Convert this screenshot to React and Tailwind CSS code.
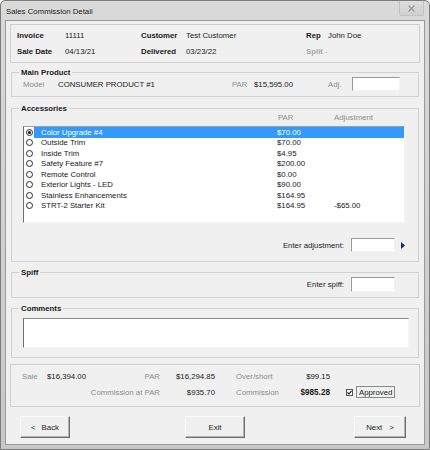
import React from 'react'

const accessories = [
  { name: 'Color Upgrade #4', par: '$70.00', adj: '' },
  { name: 'Outside Trim', par: '$70.00', adj: '' },
  { name: 'Inside Trim', par: '$4.95', adj: '' },
  { name: 'Safety Feature #7', par: '$200.00', adj: '' },
  { name: 'Remote Control', par: '$0.00', adj: '' },
  { name: 'Exterior Lights - LED', par: '$90.00', adj: '' },
  { name: 'Stainless Enhancements', par: '$164.95', adj: '' },
  { name: 'STRT-2 Starter Kit', par: '$164.95', adj: '-$65.00' },
]

function Input({ className = '' }) {
  return (
    <div className={"h-[14px] bg-white border border-t-[#9a9a9a] border-l-[#9a9a9a] border-r-[#f2f2f2] border-b-[#f2f2f2] " + className} />
  )
}

function Group({ title, className = '', children }) {
  return (
    <fieldset className={"mx-[5px] border border-[#d2d2d2] " + className}>
      <legend className="ml-[7px] px-[2px] font-bold leading-[9px]">{title}</legend>
      {children}
    </fieldset>
  )
}

function Button({ children, className = '' }) {
  return (
    <button className={"h-[22px] bg-[#f0f0f0] border border-t-[#fbfbfb] border-l-[#fbfbfb] border-r-[#6e6e6e] border-b-[#6e6e6e] shadow-[inset_-1px_-1px_0_#b4b4b4] flex items-center justify-center " + className}>
      {children}
    </button>
  )
}

function Radio({ checked }) {
  return (
    <div className="w-[7px] h-[7px] rounded-full border border-[#2a2a2a] bg-white flex items-center justify-center shrink-0">
      {checked && <div className="w-[3px] h-[3px] rounded-full bg-[#111]" />}
    </div>
  )
}

export default function App() {
  return (
    <div className="w-[430px] h-[450px] bg-gradient-to-b from-[#dadada] to-[#c8c8c8] border border-[#7c7c7c] rounded-t-[5px] font-['Liberation_Sans',Arial,sans-serif] text-[7.8px] leading-[9px] text-[#1a1a1a] flex flex-col">
      <div className="h-[19px] flex justify-between">
        <div className="pl-[5px] pt-[6px]">Sales Commission Detail</div>
        <div className="w-[25px] h-[15px] mr-[5px] border border-t-0 border-[#c2c2c2] rounded-b-[2px] bg-gradient-to-b from-[#dedede] to-[#d0d0d0] flex items-center justify-center">
          <svg width="7" height="7" viewBox="0 0 7 7">
            <path d="M1 1 L6 6 M6 1 L1 6" stroke="#9a9a9a" strokeWidth="1.3" strokeLinecap="square" />
          </svg>
        </div>
      </div>

      <div className="h-[425px] mx-[4px] bg-[#f0f0f0] border border-[#9a9a9a] flex flex-col">
        {/* header */}
        <div className="mt-[3px] mx-[4px] h-[39px] border border-[#cfcfcf] pl-[6px] pt-[6px]">
          <div className="grid grid-cols-[48px_76px_45px_120px_22px_auto] gap-y-[7px]">
            <div className="font-bold">Invoice</div>
            <div>11111</div>
            <div className="font-bold">Customer</div>
            <div>Test Customer</div>
            <div className="font-bold">Rep</div>
            <div>John Doe</div>
            <div className="font-bold">Sale Date</div>
            <div>04/13/21</div>
            <div className="font-bold">Delivered</div>
            <div>03/23/22</div>
            <div className="font-bold text-[#a8a8a8]">Split</div>
            <div className="text-[#a8a8a8] -ml-[3px]">-</div>
          </div>
        </div>

        {/* main product */}
        <Group title="Main Product" className="mt-[5px] pb-[5px] mx-[4px]">
          <div className="flex items-center pl-[11px]">
            <div className="w-[35px] text-[#8c8c8c]">Model</div>
            <div className="w-[174px]">CONSUMER PRODUCT #1</div>
            <div className="w-[22px] text-[#8c8c8c]">PAR</div>
            <div className="w-[74px]">$15,595.00</div>
            <div className="w-[24px] text-[#8c8c8c]">Adj.</div>
            <Input className="w-[48px]" />
          </div>
        </Group>

        {/* accessories */}
        <Group title="Accessories" className="mt-[7px] pb-[9px] mx-[4px]">
          <div className="flex pl-[266px] text-[#8c8c8c]">
            <div className="w-[56px]">PAR</div>
            <div>Adjustment</div>
          </div>
          <div className="ml-[11px] mt-[4px] w-[382px] h-[97px] bg-white border border-t-[#a0a0a0] border-l-[#6e6e6e] border-r-[#f4f4f4] border-b-[#f4f4f4]">
            {accessories.map((a, i) => (
              <div key={a.name} className="flex items-center h-[10.5px]">
                <div className="w-[10px] pl-[2px] flex items-center">
                  <Radio checked={i === 0} />
                </div>
                <div className={"flex-1 h-full flex items-center " + (i === 0 ? 'bg-[#3399ff] text-white' : '')}>
                  <div className="w-[243px] pl-[7px]">{a.name}</div>
                  <div className="w-[57px]">{a.par}</div>
                  <div>{a.adj}</div>
                </div>
              </div>
            ))}
          </div>
          <div className="flex items-center mt-[15px]">
            <div className="w-[339px] pr-[7px] text-right">Enter adjustment:</div>
            <Input className="w-[44px]" />
            <svg className="ml-[6px]" width="4" height="7" viewBox="0 0 4 7">
              <path d="M0 0 L4 3.5 L0 7 Z" fill="#1a237e" />
            </svg>
          </div>
        </Group>

        {/* spiff */}
        <Group title="Spiff" className="mt-[6px] pb-[5px] mx-[4px]">
          <div className="flex items-center">
            <div className="w-[339px] pr-[7px] text-right">Enter spiff:</div>
            <Input className="w-[44px] h-[15px]" />
          </div>
        </Group>

        {/* comments */}
        <Group title="Comments" className="mt-[6px] pb-[9px] mx-[4px]">
          <div className="ml-[11px] mt-[5px] w-[386px] h-[30px] bg-white border border-t-[#8a8a8a] border-l-[#6e6e6e] border-r-[#f4f4f4] border-b-[#f4f4f4]" />
        </Group>

        {/* summary */}
        <div className="mt-[6px] mx-[4px] h-[43px] border border-[#cfcfcf] pl-[11px] pt-[7px]">
          <div className="grid grid-cols-[25px_60px_53px_55px_75px_40px_auto] items-center gap-y-[5px]">
            <div className="text-[#8c8c8c]">Sale</div>
            <div>$16,394.00</div>
            <div className="text-right text-[#8c8c8c]">PAR</div>
            <div className="text-right">$16,294.85</div>
            <div className="pl-[21px] text-[#8c8c8c]">Over/short</div>
            <div className="text-right">$99.15</div>
            <div />
            <div className="col-span-3 text-right text-[#8c8c8c]">Commission at PAR</div>
            <div className="text-right">$935.70</div>
            <div className="pl-[21px] text-[#8c8c8c]">Commission</div>
            <div className="text-right font-bold text-[8.2px]">$985.28</div>
            <div className="pl-[16px] flex items-center">
              <div className="w-[7px] h-[7px] border border-[#555] bg-white flex items-center justify-center">
                <svg width="5" height="5" viewBox="0 0 5 5">
                  <path d="M0.5 2.5 L2 4 L4.5 0.8" stroke="#111" strokeWidth="1.1" fill="none" />
                </svg>
              </div>
              <div className="ml-[3px] h-[12px] px-[2px] border border-[#8a8a8a] flex items-center">Approved</div>
            </div>
          </div>
        </div>

        {/* buttons */}
        <div className="flex mt-[9px]">
          <Button className="ml-[14px] w-[50px]">
            <span className="mr-[6px]">&lt;</span>Back
          </Button>
          <Button className="ml-[115px] w-[60px]">Exit</Button>
          <Button className="ml-[109px] w-[52px]">
            Next<span className="ml-[7px]">&gt;</span>
          </Button>
        </div>
      </div>
    </div>
  )
}
